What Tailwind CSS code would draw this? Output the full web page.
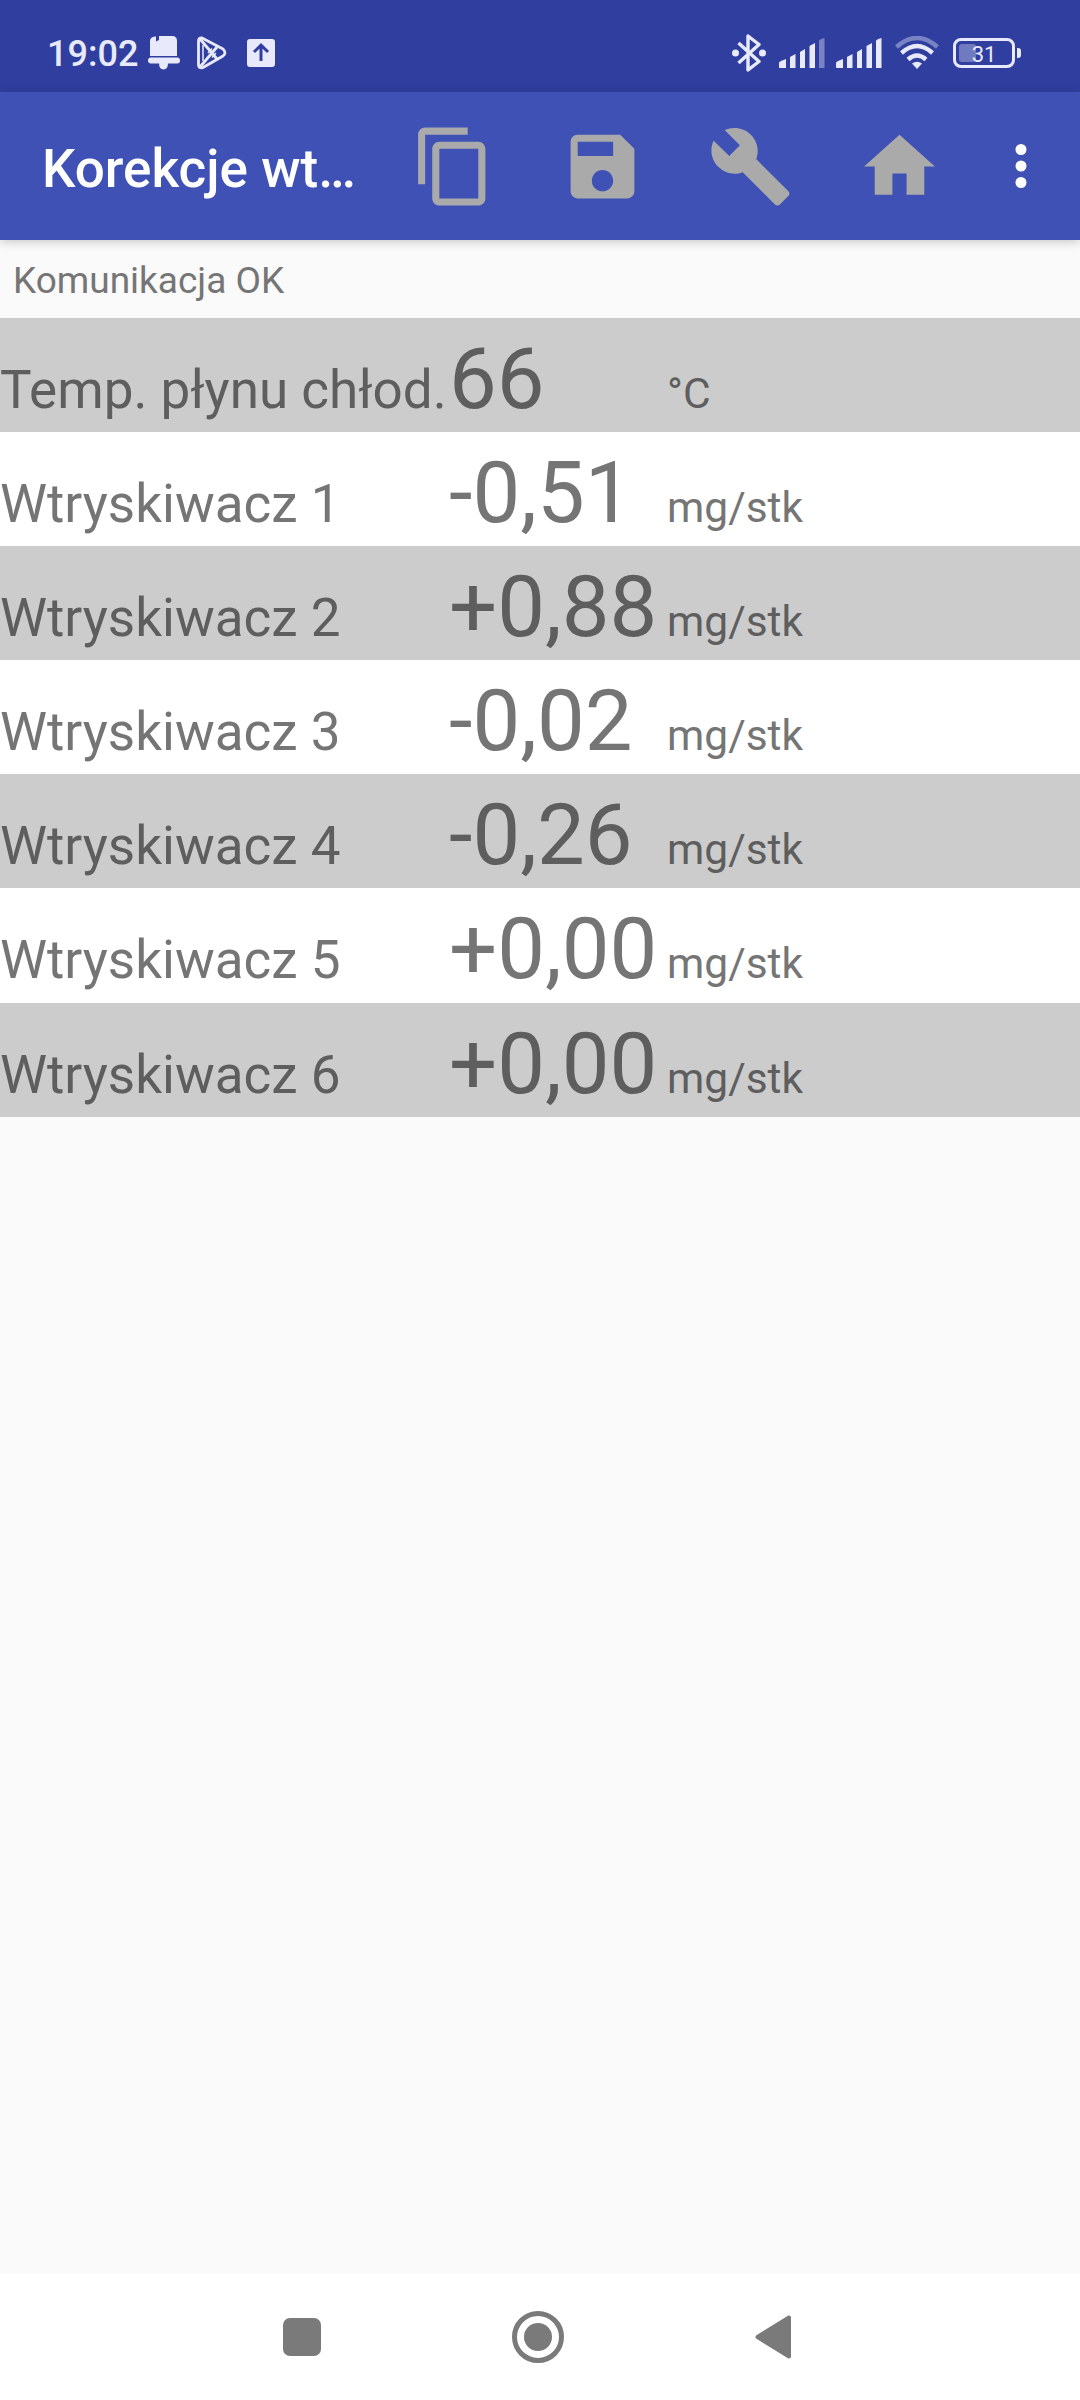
<!DOCTYPE html>
<html lang="pl">
  <head>
    <meta charset="UTF-8" />
    <meta name="viewport" content="width=device-width, initial-scale=1.0" />
    <title>Korekcje wtrysku</title>
    <script src="https://cdn.jsdelivr.net/npm/@tailwindcss/browser@4"></script>
  </head>
  <body class="bg-[#fafafa] font-[Roboto,sans-serif] text-[#757575]">
    <div class="w-[1080px] h-[2400px] flex flex-col overflow-hidden">
      <!-- Status bar -->
      <div class="h-[92px] shrink-0 bg-[#303f9f] text-[#e8eafc] flex items-center justify-between pl-[47px] pr-[59px] pt-[14px]">
        <div class="flex items-center">
          <span class="w-[101px] text-[36px] leading-[42px] font-medium pt-[2px]">19:02</span>
          <svg class="w-[32px] h-[36px]" viewBox="0 0 32 36" fill="currentColor">
            <path d="M7 1.500H8V6.500L11 5V1H24Q29 1 29 6V21H2V6Q2 2 7 1.500Z" />
            <rect x="0" y="22.500" width="32" height="6" rx="3" />
            <path d="M11 28H20Q20 34.500 15.500 34.500T11 28Z" />
          </svg>
          <svg class="ml-[16px] w-[32px] h-[34px]" viewBox="0 0 32 34" fill="none" stroke="currentColor" stroke-width="2.800" stroke-linejoin="round">
            <path d="M2.500 5Q2.500 1.500 6 2L27 13Q31 17 27 20L7 31.500Q3 33 2.500 29Z" />
            <path d="M4 3L21 23M4 31L21 11" />
            <path d="M7 9V25M12 17L16 12.500M16 21.500L20 17" stroke-width="1.500" />
          </svg>
          <svg class="ml-[19px] w-[28px] h-[28px]" viewBox="0 0 28 28">
            <rect width="28" height="28" rx="3" fill="currentColor" />
            <path d="M14 22V7M7 13L14 6L21 13" fill="none" stroke="#303f9f" stroke-width="3" />
          </svg>
        </div>
        <div class="flex items-center">
          <svg class="w-[34px] h-[38px]" viewBox="0 0 34 38" fill="none" stroke="currentColor" stroke-width="3.400" stroke-linejoin="round">
            <path d="M6.500 9L27 27.500L16 36V2L27 10.500L6.500 29" />
            <circle cx="3.500" cy="19" r="3.500" fill="currentColor" stroke="none" />
            <circle cx="30.500" cy="19" r="3.500" fill="currentColor" stroke="none" />
          </svg>
          <svg class="ml-[13px] w-[46px] h-[30px]" viewBox="0 0 46 30" fill="currentColor">
            <path d="M0 25Q0 24 2 23L7 21V30H1Q0 30 0 29Z" />
            <path d="M11 19L16.500 16V30H11Z" />
            <path d="M21 14L26 11V30H21Z" />
            <path d="M30.500 8L36 5V30H30.500Z" />
            <path d="M40 3Q40 1.500 45.500 0V30H40Z" opacity=".4" />
          </svg>
          <svg class="ml-[11px] w-[46px] h-[30px]" viewBox="0 0 46 30" fill="currentColor">
            <path d="M0 25Q0 24 2 23L7 21V30H1Q0 30 0 29Z" />
            <path d="M11 19L16.500 16V30H11Z" />
            <path d="M21 14L26 11V30H21Z" />
            <path d="M30.500 8L36 5V30H30.500Z" />
            <path d="M40 3Q40 1.500 45.500 0V30H40Z" />
          </svg>
          <svg class="ml-[13px] w-[44px] h-[34px]" viewBox="0 0 44 34" fill="none" stroke="currentColor" stroke-width="4.400">
            <path d="M1.500 11Q22 -7 42.500 11" opacity=".4" />
            <path d="M6.500 17Q22 3 37.500 17" />
            <path d="M13 23.500Q22 15.500 31 23.500" />
            <path d="M17 27.500Q22 24 27 27.500L22 33Z" fill="currentColor" stroke="none" />
          </svg>
          <div class="ml-[14px] w-[62px] h-[30px] rounded-[8px] border-[3px] border-current p-[3px] relative">
            <div class="w-[17px] h-full rounded-[3px] bg-[#e8eafc]/35"></div>
            <span class="absolute inset-0 text-center text-[22px] leading-[27px]">31</span>
          </div>
          <div class="ml-[2px] w-[4px] h-[10px] rounded-r-[3px] bg-current"></div>
        </div>
      </div>

      <!-- App bar -->
      <header class="h-[148px] shrink-0 bg-[#3f51b5] text-[#aaaaaa] flex items-center pl-[42px] pr-[26px] shadow-[0_2px_10px_rgba(0,0,0,0.2)]">
        <h1 class="w-[336px] text-[53px] leading-[64px] font-medium text-white whitespace-nowrap pt-[5px]">Korekcje wt…</h1>
        <div class="flex gap-[63.500px] ml-[33px]">
          <svg class="w-[85px] h-[85px]" viewBox="0 0 24 24" fill="currentColor">
            <path d="M16 1H4c-1.100 0-2 .9-2 2v14h2V3h12V1zm3 4H8c-1.100 0-2 .9-2 2v14c0 1.100.9 2 2 2h11c1.100 0 2-.9 2-2V7c0-1.100-.9-2-2-2zm0 16H8V7h11v14z" />
          </svg>
          <svg class="w-[85px] h-[85px]" viewBox="0 0 24 24" fill="currentColor">
            <path d="M17 3H5c-1.110 0-2 .9-2 2v14c0 1.100.89 2 2 2h14c1.100 0 2-.9 2-2V7l-4-4zm-5 16c-1.660 0-3-1.340-3-3s1.340-3 3-3 3 1.340 3 3-1.340 3-3 3zm3-10H5V5h10v4z" />
          </svg>
          <svg class="w-[85px] h-[85px]" viewBox="0 0 24 24" fill="currentColor">
            <path d="M22.700 19l-9.100-9.100c.9-2.300.4-5-1.500-6.900-2-2-5-2.400-7.400-1.300L9 6 6 9 1.600 4.700C.4 7.100.9 10.100 2.900 12.100c1.900 1.900 4.600 2.400 6.900 1.500l9.100 9.100c.4.4 1 .4 1.400 0l2.300-2.300c.5-.4.5-1.100.1-1.400z" />
          </svg>
          <svg class="w-[85px] h-[85px]" viewBox="0 0 24 24" fill="currentColor">
            <path d="M10 20v-6h4v6h5v-8h3L12 3 2 12h3v8z" />
          </svg>
        </div>
        <svg class="ml-auto w-[66px] h-[66px] text-white" viewBox="0 0 24 24" fill="currentColor">
          <circle cx="12" cy="6" r="2" />
          <circle cx="12" cy="12" r="2" />
          <circle cx="12" cy="18" r="2" />
        </svg>
      </header>

      <!-- Connection state -->
      <p class="h-[78px] shrink-0 pl-[13px] pt-[19px] text-[37px] leading-[44px]">Komunikacja OK</p>

      <!-- Readings -->
      <main class="flex-1">
        <div class="h-[114.100px] flex items-baseline pt-[11px] whitespace-nowrap bg-[#cccccc] text-[#5e5e5e]">
          <span class="w-[449px] text-[53px]">Temp. płynu chłod.</span>
          <span class="w-[218px] text-[85px] leading-[100px]">66</span>
          <span class="text-[42.500px]">°C</span>
        </div>
        <div class="h-[114.100px] flex items-baseline pt-[11px] whitespace-nowrap bg-white">
          <span class="w-[449px] text-[53px]">Wtryskiwacz 1</span>
          <span class="w-[218px] text-[85px] leading-[100px]">-0,51</span>
          <span class="text-[42.500px]">mg/stk</span>
        </div>
        <div class="h-[114.100px] flex items-baseline pt-[11px] whitespace-nowrap bg-[#cccccc] text-[#5e5e5e]">
          <span class="w-[449px] text-[53px]">Wtryskiwacz 2</span>
          <span class="w-[218px] text-[85px] leading-[100px]">+0,88</span>
          <span class="text-[42.500px]">mg/stk</span>
        </div>
        <div class="h-[114.100px] flex items-baseline pt-[11px] whitespace-nowrap bg-white">
          <span class="w-[449px] text-[53px]">Wtryskiwacz 3</span>
          <span class="w-[218px] text-[85px] leading-[100px]">-0,02</span>
          <span class="text-[42.500px]">mg/stk</span>
        </div>
        <div class="h-[114.100px] flex items-baseline pt-[11px] whitespace-nowrap bg-[#cccccc] text-[#5e5e5e]">
          <span class="w-[449px] text-[53px]">Wtryskiwacz 4</span>
          <span class="w-[218px] text-[85px] leading-[100px]">-0,26</span>
          <span class="text-[42.500px]">mg/stk</span>
        </div>
        <div class="h-[114.100px] flex items-baseline pt-[11px] whitespace-nowrap bg-white">
          <span class="w-[449px] text-[53px]">Wtryskiwacz 5</span>
          <span class="w-[218px] text-[85px] leading-[100px]">+0,00</span>
          <span class="text-[42.500px]">mg/stk</span>
        </div>
        <div class="h-[114.100px] flex items-baseline pt-[11px] whitespace-nowrap bg-[#cccccc] text-[#5e5e5e]">
          <span class="w-[449px] text-[53px]">Wtryskiwacz 6</span>
          <span class="w-[218px] text-[85px] leading-[100px]">+0,00</span>
          <span class="text-[42.500px]">mg/stk</span>
        </div>
      </main>

      <!-- Navigation bar -->
      <nav class="h-[126px] shrink-0 bg-white text-[#7a7a7a] flex items-center justify-between pl-[283px] pr-[289px]">
        <div class="w-[38px] h-[38px] rounded-[7px] bg-current"></div>
        <svg class="w-[52px] h-[52px]" viewBox="0 0 52 52">
          <circle cx="26" cy="26" r="23.500" fill="none" stroke="currentColor" stroke-width="5" />
          <circle cx="26" cy="26" r="14" fill="currentColor" />
        </svg>
        <svg class="w-[36px] h-[44px]" viewBox="0 0 36 44" fill="currentColor" stroke="currentColor" stroke-width="4" stroke-linejoin="round">
          <path d="M34 2.500V41.500L2.500 22Z" />
        </svg>
      </nav>
    </div>
  </body>
</html>
